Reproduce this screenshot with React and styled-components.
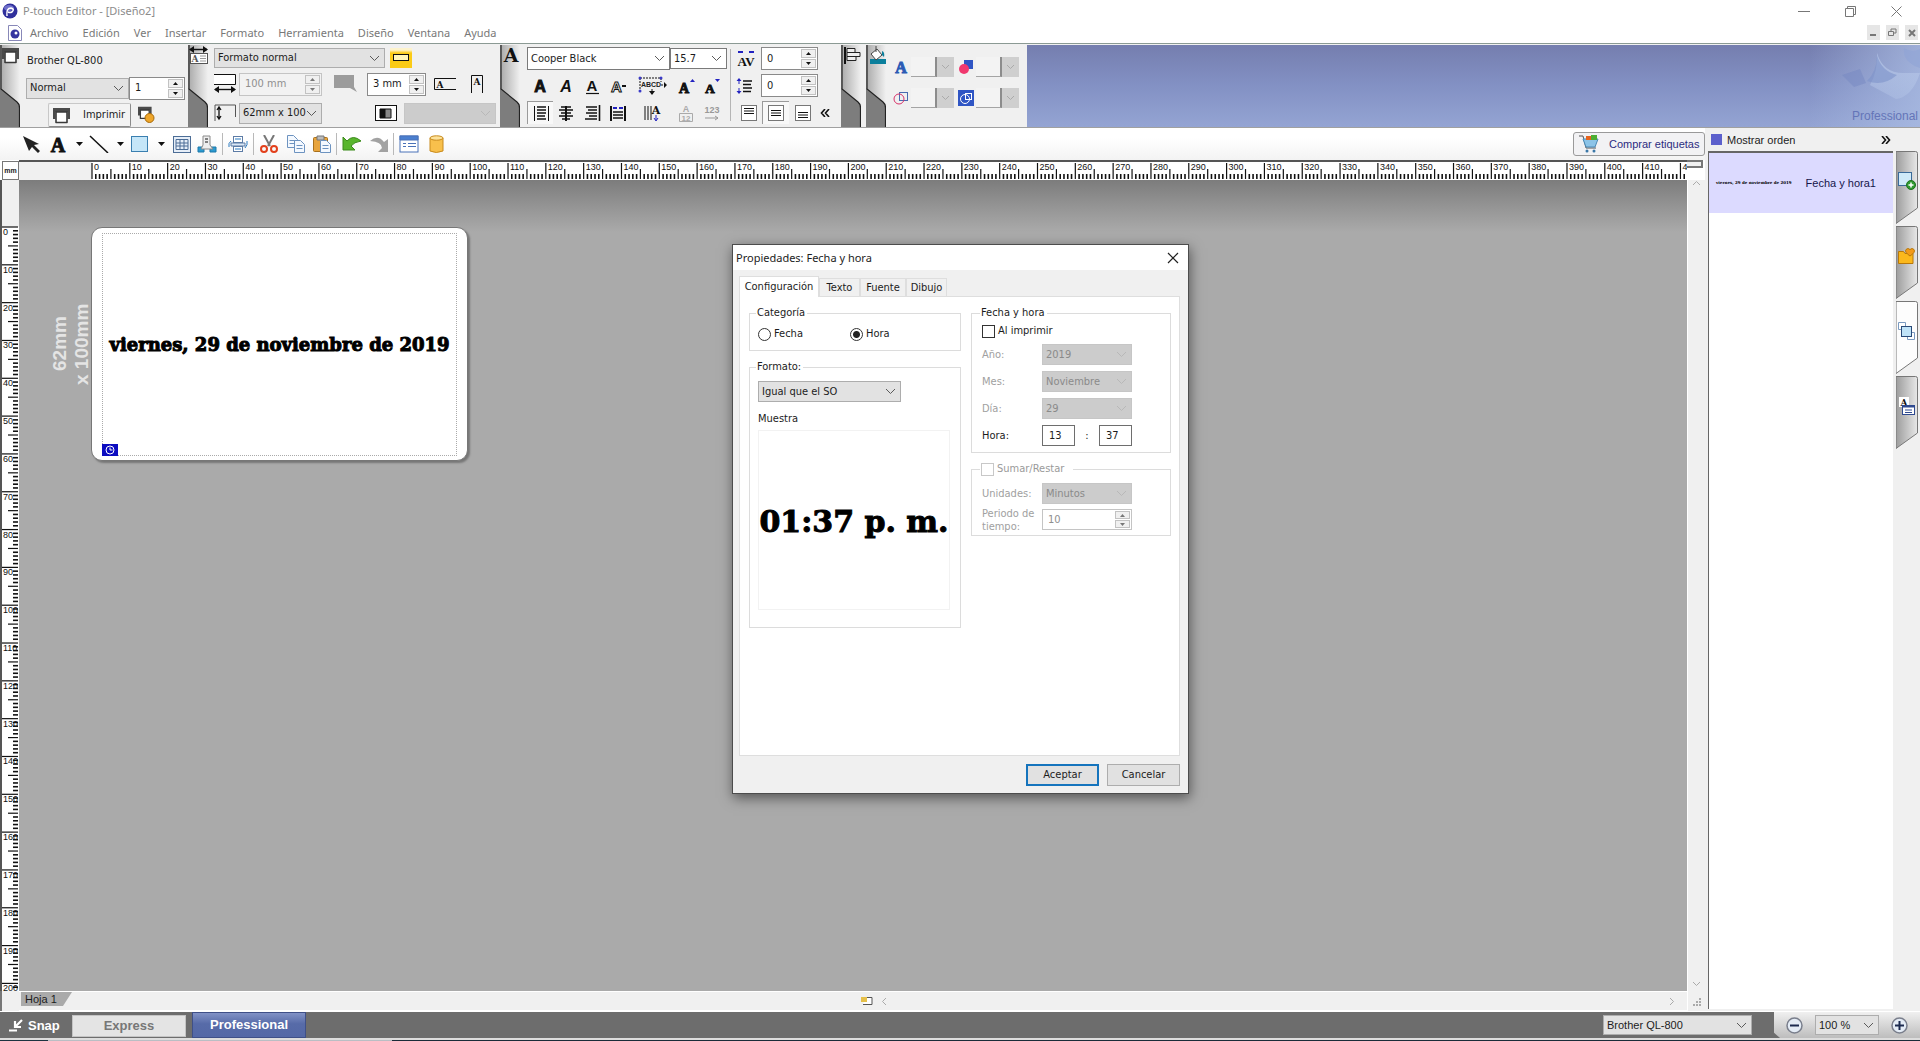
import React from "react";
import styled, { createGlobalStyle, css } from "styled-components";

const ui = `"DejaVu Sans Condensed", "DejaVu Sans", Roboto, sans-serif`;
const segoe = `"Noto Sans", "Open Sans", sans-serif`;
const arial = `"Liberation Sans", Arial, sans-serif`;
const slab = `"DejaVu Serif", "Liberation Serif", serif`;

const Global = createGlobalStyle`
  *, *::before, *::after { box-sizing: border-box; }
  body { margin: 0; overflow: hidden; background: #fff; }
  button, input, select { font: inherit; color: inherit; margin: 0; border-radius: 0; }
  button { padding: 0; border: 0; background: none; }
  svg { display: block; flex: none; }
`;

const Page = styled.div`
  display: flex;
  flex-direction: column;
  height: 100vh;
  font: 11px/14px ${ui};
  color: #1c1c1c;
`;

/* ---------- title and menu ---------- */

const TitleBar = styled.header`
  display: flex;
  align-items: center;
  height: 22px;
  padding: 0 12px 0 2px;
  gap: 5px;
  font: 11px/14px ${segoe};
  color: #8c8c8c;
`;
const WindowButtons = styled.div`
  display: flex;
  margin-left: auto;
  gap: 22px;
`;
const WindowButton = styled.button`
  display: grid;
  place-items: center;
  width: 24px;
  height: 20px;
`;
const MenuBar = styled.nav`
  display: flex;
  align-items: center;
  height: 22px;
  padding: 0 2px 0 8px;
  gap: 8px;
  border-bottom: 1px solid #8b9a94;
  font: 11px/14px ${segoe};
`;
const MenuLinks = styled.div`
  display: flex;
  gap: 14px;
`;
const MenuLink = styled.a`
  color: #787878;
  text-decoration: none;
`;
const MdiButtons = styled.div`
  display: flex;
  margin-left: auto;
  gap: 6px;
`;
const MdiButton = styled.button`
  display: grid;
  place-items: center;
  width: 13px;
  height: 15px;
  background: #e6e6e6;
`;

/* ---------- form pieces ---------- */

const SelectBox = styled.span`
  display: grid;
  grid-template-columns: 1fr 15px;
  align-items: center;
  flex: none;
  width: ${(p) => p.$w}px;
  height: ${(p) => p.$h || 21}px;
  background: ${(p) => (p.$off ? "#cccccc" : p.$white ? "#fff" : "#e2e2e2")};
  border: 1px solid ${(p) => (p.$off ? "#c6c6c6" : p.$white ? "#7a7a7a" : "#adadad")};
  color: ${(p) => (p.$off ? "#8a8a8a" : "#1c1c1c")};
  select {
    grid-area: 1 / 1 / 2 / 3;
    width: 100%;
    height: 100%;
    padding: 0 15px 0 3px;
    appearance: none;
    border: 0;
    background: none;
    opacity: 1;
  }
  svg {
    grid-area: 1 / 2;
    pointer-events: none;
  }
`;
const Pick = ({ w, h, off, white, value, label, id }) => (
  <SelectBox $w={w} $h={h} $off={off} $white={white}>
    <select id={id} aria-label={label} disabled={off} defaultValue={value}>
      <option>{value}</option>
    </select>
    <svg width="11" height="7" fill="none" stroke={off ? "#b8b8b8" : "#5a5a5a"}>
      <path d="M1 1l4.500 4.500L10 1" />
    </svg>
  </SelectBox>
);

const SpinBox = styled.span`
  display: flex;
  flex: none;
  width: ${(p) => p.$w}px;
  height: ${(p) => p.$h || 23}px;
  padding: 1px;
  background: ${(p) => (p.$pale ? "#f2f2f2" : "#fff")};
  border: 1px solid ${(p) => (p.$off ? "#c4c4c4" : "#8a8a8a")};
  color: ${(p) => (p.$off ? "#8f8f8f" : "#1c1c1c")};
  input {
    flex: 1;
    min-width: 0;
    padding: 0 4px;
    border: 0;
    background: none;
  }
`;
const SpinArrows = styled.span`
  display: grid;
  grid-template-rows: 1fr 1fr;
  width: 15px;
  gap: 1px;
`;
const SpinButton = styled.button`
  display: grid;
  place-items: center;
  background: #f0f0f0;
  border: 1px solid #c2c2c2;
`;
const Spin = ({ w, h, off, pale, value, label, id }) => (
  <SpinBox $w={w} $h={h} $off={off} $pale={pale}>
    <input id={id} aria-label={label} type="text" defaultValue={value} disabled={off} />
    <SpinArrows>
      {["M0 3L2.5 0L5 3z", "M0 0L2.5 3L5 0z"].map((d) => (
        <SpinButton key={d} aria-label={`${label} ${d[3] === "3" ? "+" : "-"}`} disabled={off}>
          <svg width="5" height="3"><path d={d} fill={off ? "#777" : "#111"} /></svg>
        </SpinButton>
      ))}
    </SpinArrows>
  </SpinBox>
);

/* ---------- ribbon ---------- */

const Ribbon = styled.section`
  display: flex;
  height: 84px;
  padding-top: 1px;
  flex: none;
  background: #f0f0f0;
  border-bottom: 1px solid #a0a0a0;
`;
const Group = styled.div`
  display: flex;
  flex: none;
`;
const GroupBody = styled.div`
  display: flex;
  flex-direction: column;
  width: ${(p) => p.$w}px;
  padding: 3px 0 0 6px;
  gap: 4px;
`;
const Line = styled.div`
  display: flex;
  align-items: center;
  height: ${(p) => p.$h || 23}px;
  gap: ${(p) => p.$gap || 0}px;
`;
const Columns = styled.div`
  display: flex;
  width: ${(p) => p.$w}px;
`;
const Column = styled.div`
  display: flex;
  flex-direction: column;
  flex: none;
  gap: 4px;
  padding: 2px 0 0 ${(p) => p.$left}px;
  width: ${(p) => p.$w}px;
`;
const Divider = styled.span`
  width: 1px;
  height: 72px;
  margin-top: 4px;
  background: #b5b5b5;
`;
const Tool = styled.button`
  display: grid;
  place-items: center;
  flex: none;
  width: ${(p) => p.$w || 26}px;
  height: ${(p) => p.$h || 23}px;
  ${(p) =>
    p.$on &&
    css`
      background: #f8f8f8;
      border-left: 1px solid #9a9a9a;
      border-top: 1px solid #9a9a9a;
    `}
`;
const PrinterName = styled.span`
  padding-left: 1px;
`;
const PrintRow = styled.div`
  display: flex;
  align-items: center;
  gap: 7px;
  height: 24px;
  padding-left: 22px;
`;
const PrintButton = styled.button`
  display: flex;
  align-items: center;
  width: 83px;
  height: 24px;
  padding-left: 4px;
  gap: 12px;
  background: #f3f3f3;
  border: 1px solid #c8c8c8;
  border-right-color: #8a8a8a;
  border-bottom-color: #8a8a8a;
  border-radius: 2px;
`;
const FormatButton = styled.button`
  display: grid;
  place-items: center;
  width: 22px;
  height: 20px;
  background: linear-gradient(#fdf3cc 2px, #fbcb16 5px);
`;
const ColorPair = styled.div`
  display: grid;
  grid-template-columns: 18px 26px 17px;
  align-items: center;
  height: 22px;
`;
const Swatch = styled.button`
  height: 20px;
  background: #f3f3f3;
  border-right: 2px solid #8c8c8c;
  border-bottom: 1px solid #a4a4a4;
`;
const SwatchDrop = styled.button`
  display: grid;
  place-items: center;
  height: 20px;
  background: #cfcfcf;
`;
const ColorGrid = styled.div`
  display: grid;
  grid-template-columns: 61px 61px;
  gap: 9px 4px;
  width: 141px;
  padding: 11px 0 0 7px;
  align-content: start;
`;
const Banner = styled.div`
  position: relative;
  display: flex;
  flex: 1;
  justify-content: flex-end;
  align-items: flex-end;
  overflow: hidden;
  background: linear-gradient(#757eaf, #8391c4 50%, #94a4d3);
  svg {
    position: absolute;
    right: 0;
    top: 0;
  }
`;
const BannerText = styled.span`
  position: relative;
  padding: 0 2px 4px 0;
  font: 12px/14px ${arial};
  color: #6475b8;
`;

const TabShape = ({ children }) => (
  <svg width="20" height="82" viewBox="0 0 20 82">
    <defs>
      <linearGradient id="tabFill"><stop offset="0" stopColor="#a8a8a8" /><stop offset="1" stopColor="#f0f0f0" /></linearGradient>
    </defs>
    <rect width="20" height="82" fill="#7d7d7d" />
    <path d="M0 0H20V62Q20 59 17 57L0 43z" fill="url(#tabFill)" />
    <path d="M1 0V44L17 57Q19.500 59 19.500 63V82" fill="none" stroke="#222" strokeWidth="1.200" />
    {children}
  </svg>
);

const Ink = ({ w = 20, h = 18, children, ...p }) => (
  <svg width={w} height={h} viewBox={`0 0 ${w} ${h}`} fill="none" stroke="#111" {...p}>{children}</svg>
);
const Glyph = ({ x, y, s, f = slab, w = "bold", fill = "#111", style = "normal", children, ...p }) => (
  <text x={x} y={y} textAnchor="middle" stroke="none" fill={fill} fontFamily={f} fontSize={s} fontWeight={w} fontStyle={style} {...p}>{children}</text>
);
const Printer = () => (
  <g>
    <path d="M0 1h17v11h-2.500V5h-12v7H0z" fill="#4a4a4a" stroke="none" />
    <path d="M3 5h11v10.500H3z" fill="#fff" stroke="#3a3a3a" strokeWidth="1.600" strokeLinejoin="round" />
  </g>
);
const rows = (xs) => xs.map(([a, b, y]) => <path key={y} d={`M${a} ${y}H${b}`} strokeWidth="1.500" />);
const Small = ({ d }) => <Ink w={9} h={6} stroke="#aaa"><path d={d || "M1 1l3.500 3.500L8 1"} /></Ink>;

const TextIcons = [
  ["Negrita", 26, <Ink><Glyph x={10} y={15} s={16} f={arial} w={900} stroke="#111">A</Glyph></Ink>],
  ["Cursiva", 26, <Ink><Glyph x={10} y={15} s={16} f={arial} style="italic">A</Glyph></Ink>],
  ["Subrayado", 26, <Ink><Glyph x={10} y={14} s={15} f={arial}>A</Glyph><path d="M4 16.500h13" strokeWidth="1.200" /></Ink>],
  ["Contorno", 26, <Ink><text x="3" y="15" fontFamily={arial} fontWeight="bold" fontSize="15" fill="#fff" stroke="#111">A</text><path d="M14 9h4" strokeWidth="2" /></Ink>],
  ["Ajuste", 42, <Ink w={30} h={20}><path d="M3 2h21M3 2v13M24 2v4M24 9h6M15 13v5" strokeDasharray="2 1" /><Glyph x={14} y={11} s={7} f={arial} fill="#222">ABCD</Glyph><path d="M27 6l3 3-3 3zM12 15l3 4 3-4z" fill="#111" stroke="none" /><g fill="#3a3ac8" stroke="none"><circle cx="3" cy="2" r="1.500" /><circle cx="24" cy="2" r="1.500" /><circle cx="3" cy="15" r="1.500" /></g></Ink>],
  ["Aumentar", 26, <Ink><Glyph x={8} y={16} s={14} f={`"Liberation Serif", serif`} stroke="#111">A</Glyph><path d="M14 5l2.500-3L19 5z" fill="#2222c0" stroke="none" /></Ink>],
  ["Reducir", 26, <Ink><Glyph x={8} y={16} s={13} f={`"Liberation Serif", serif`} stroke="#111">A</Glyph><path d="M13 2l2.500 3L18 2z" fill="#2222c0" stroke="none" /></Ink>],
];
const AlignIcons = [
  ["Izquierda", 26, <Ink><path d="M3.500 2v15M17.500 2v15" />{rows([[6, 15, 3], [6, 15, 6], [6, 15, 9], [6, 14, 12], [6, 15, 15]])}</Ink>, true],
  ["Centro", 26, <Ink><path d="M10 2v15" strokeWidth="2" />{rows([[5, 15, 3], [3, 17, 6], [5, 15, 9], [3, 17, 12], [6, 14, 15]])}</Ink>],
  ["Derecha", 26, <Ink><path d="M17.500 1v16" strokeWidth="1.600" />{rows([[4, 15, 3], [6, 15, 6], [4, 15, 9], [7, 15, 12], [3, 15, 15]])}</Ink>],
  ["Justificar", 26, <Ink><path d="M3 2v15M17 2v15" strokeWidth="2" /><path d="M5 4h10" stroke="#2222c0" strokeWidth="2" strokeDasharray="4 2" />{rows([[5, 15, 8], [5, 15, 11], [5, 15, 14]])}</Ink>],
  ["Vertical", 42, <Ink><path d="M3 2v14M6 2v14M9 2v14" /><Glyph x={14} y={10} s={11}>A</Glyph><path d="M14 11v5M12 14l2 3 2-3" stroke="#2222c0" /></Ink>],
  ["Fracción", 26, <Ink stroke="#aaa"><Glyph x={10} y={8} s={9} f={arial} fill="#aaa">A</Glyph><path d="M3.500 9.500h13v8h-13z" /><Glyph x={10} y={17} s={8} f={arial} fill="#aaa">12</Glyph></Ink>],
  ["Numeración", 26, <Ink stroke="#999"><Glyph x={10} y={9} s={9} f={arial} fill="#999">123</Glyph><path d="M3 14h13M13 12l3 2-3 2" /></Ink>],
];
const VAlign = [["Arriba", 4], ["Medio", 6], ["Abajo", 8]];

const Spacer = styled.span`
  flex: none;
  width: ${(p) => p.$w}px;
`;

function RibbonBar() {
  return (
    <Ribbon>
      <Group>
        <TabShape><g transform="translate(2 2)"><Printer /></g></TabShape>
        <GroupBody $w={168}>
          <Line $h={25}><PrinterName>Brother QL-800</PrinterName></Line>
          <Line $h={22}><Pick w={103} value="Normal" label="Calidad" /><Spin w={56} value="1" label="Copias" /></Line>
          <PrintRow>
            <PrintButton><Ink w={18} h={17}><Printer /></Ink>Imprimir</PrintButton>
            <Tool $w={18} aria-label="Opciones de impresión"><Ink w={18} h={18}><g transform="scale(.8)"><Printer /></g><circle cx="11.500" cy="12" r="4.500" fill="#efa62a" stroke="#a66a0c" /></Ink></Tool>
          </PrintRow>
        </GroupBody>
      </Group>
      <Group>
        <TabShape>
          <path d="M2 4.500h17" stroke="#111" strokeWidth="1.500" /><path d="M6 1v7L1 4.500zM15 1v7l5-3.500z" fill="#111" />
          <rect x="2.500" y="8.500" width="17" height="10" fill="#fff" stroke="#555" />
          <Glyph x={7} y={17} s={9} fill="#555">A</Glyph><path d="M12 11h6M12 13.500h6M12 16h6" stroke="#999" />
        </TabShape>
        <GroupBody $w={292}>
          <Line $h={20} $gap={5}><Pick w={171} h={20} value="Formato normal" label="Formato" /><FormatButton aria-label="Cinta"><Ink w={16} h={8}><rect x=".5" y=".5" width="15" height="6" fill="#fff6b8" /></Ink></FormatButton></Line>
          <Line $h={24} $gap={3}>
            <Ink w={22} h={20}><path d="M0 .500h21.500v10H0" fill="#fff" /><path d="M1 15.500h20" strokeWidth="1.400" /><path d="M5 12v7L0 15.500zM17 12v7l5-3.500z" fill="#111" stroke="none" /></Ink>
            <Spin w={83} off pale value="100 mm" label="Longitud" />
            <Spacer $w={6} />
            <Ink w={24} h={20} stroke="none"><path d="M0 1h20v12l3 5-7-4H0z" fill="#9c9c9c" /></Ink>
            <Spacer $w={3} />
            <Spin w={59} value="3 mm" label="Margen" />
            <Tool $w={32} aria-label="Horizontal"><Ink w={22} h={14}><path d="M22 1.500H.500v11H22" /><Glyph x={6} y={11} s={9}>A</Glyph></Ink></Tool>
            <Tool $w={26} aria-label="Vertical"><Ink w={14} h={18}><path d="M1.500 18V.500h11V18" /><Glyph x={7} y={10} s={9}>A</Glyph></Ink></Tool>
          </Line>
          <Line $h={26} $gap={3}>
            <Ink w={22} h={18}><path d="M1 17V1h20.500v12" stroke="#555" /><path d="M5 3v12M3 6l2-3 2 3M3 12l2 3 2-3" strokeWidth="1.300" /></Ink>
            <Pick w={83} value="62mm x 100mm" label="Tamaño" />
            <Spacer $w={47} />
            <Ink w={22} h={16}><rect x=".5" y=".5" width="21" height="15" fill="#fff" /><path d="M5 4h5v9H5z" fill="#111" /><path d="M10 4h6v9h-6z" fill="#888" /></Ink>
            <Spacer $w={1} />
            <Pick w={92} off value="" label="Color" />
          </Line>
        </GroupBody>
      </Group>
      <Group>
        <TabShape><Glyph x={11} y={17} s={19}>A</Glyph></TabShape>
        <Columns $w={321}>
          <Column $w={210} $left={7}>
            <Line $h={23}><Pick w={143} h={23} white value="Cooper Black" label="Fuente" /><Pick w={57} h={21} white value="15.7" label="Tamaño de fuente" /></Line>
            <Line>{TextIcons.map(([n, w, i]) => <Tool key={n} $w={w} aria-label={n}>{i}</Tool>)}</Line>
            <Line>{AlignIcons.map(([n, w, i, on]) => <Tool key={n} $w={w} $on={on} aria-label={n}>{i}</Tool>)}</Line>
          </Column>
          <Divider />
          <Column $w={110} $left={4}>
            <Line $gap={4}>
              <Ink w={22} h={20}><Glyph x={11} y={17} s={13} f={`"Liberation Serif", serif`}>AV</Glyph><path d="M3 3h5M14 3h5" stroke="#2222c0" strokeWidth="2" /></Ink>
              <Spin w={57} value="0" label="Espaciado" />
            </Line>
            <Line $gap={4}>
              <Ink w={22} h={18}><path d="M8 4h9M8 7.500h8M8 11h9M8 14.500h8" strokeWidth="1.500" /><path d="M4 4v3M4 11v3" stroke="#2222c0" /><path d="M1.500 4L4 1l2.500 3zM1.500 14L4 17l2.500-3z" fill="#2222c0" stroke="none" /></Ink>
              <Spin w={57} value="0" label="Interlineado" />
            </Line>
            <Line>
              {VAlign.map(([n, y]) => (
                <Tool key={n} $w={27} $on={n === "Medio"} aria-label={n}><Ink w={16} h={16}><rect x=".5" y=".5" width="15" height="15" stroke="#777" fill="#fff" /><path d={`M3 ${y - 0.5}h10M3 ${y + 2}h10M3 ${y + 4.5}h10`} /></Ink></Tool>
              ))}
              <Tool $w={18} aria-label="Contraer"><Ink w={10} h={8}><path d="M5 0L1.500 4L5 8M9 0L5.500 4L9 8" strokeWidth="1.600" /></Ink></Tool>
            </Line>
          </Column>
        </Columns>
      </Group>
      <Group>
        <TabShape><path d="M4 2v17" stroke="#111" strokeWidth="2" /><path d="M6 3.500h8v4H6zM6 7.500h13v4H6zM6 11.500h9v4H6z" fill="#eee" stroke="#222" /></TabShape>
        <Spacer $w={5} />
      </Group>
      <Group>
        <TabShape><rect x="4" y="14" width="16" height="5" fill="#0b7f9c" /><path d="M5 9l6-5 5 6-6 5z" fill="#fff" stroke="#444" /><path d="M16 6q3 1 2 6l-2-2z" fill="#0b7f9c" /><path d="M10 7V1" stroke="#444" /></TabShape>
        <ColorGrid>
          {[
            ["Color de texto", <Glyph x={8} y={14} s={16} fill="#2b5bb5" f={`"Liberation Serif", serif`} stroke="#2b5bb5">A</Glyph>],
            ["Color de relleno", <g stroke="none"><rect x="6" y="1" width="9" height="9" fill="#2f55c4" /><circle cx="6" cy="10" r="5" fill="#f0386e" /></g>],
            ["Contorno", <g><rect x="6.500" y="2.500" width="8" height="8" stroke="#4a6ab0" /><circle cx="6" cy="9" r="5" stroke="#d8326a" /></g>],
            ["Fondo", <g><rect width="16" height="16" fill="#2f55c4" stroke="none" /><rect x="7.500" y="3.500" width="6" height="6" stroke="#fff" /><circle cx="7" cy="9" r="4.500" stroke="#fff" /></g>],
          ].map(([n, g]) => (
            <ColorPair key={n}>
              <Ink w={16} h={16}>{g}</Ink>
              <Swatch aria-label={n} />
              <SwatchDrop aria-label={`${n}: lista`}><Small /></SwatchDrop>
            </ColorPair>
          ))}
        </ColorGrid>
      </Group>
      <Banner>
        <svg width="110" height="83" viewBox="0 0 110 83">
          <defs>
            <linearGradient id="haze"><stop offset="0" stopColor="#a9bbe2" stopOpacity="0" /><stop offset="1" stopColor="#a9bbe2" stopOpacity=".8" /></linearGradient>
            <linearGradient id="petal" x2="0" y2="1"><stop offset="0" stopColor="#b4c4e6" stopOpacity=".8" /><stop offset="1" stopColor="#bccdec" stopOpacity=".3" /></linearGradient>
          </defs>
          <rect width="110" height="83" fill="url(#haze)" />
          <path d="M32 30l18-6 6 14-12 4z" fill="#7688c2" opacity=".5" />
          <path d="M67 8q6 20 26 20h17q-8 24-24 26L60 40q8-14 7-32z" fill="url(#petal)" />
          <path d="M67 10q4 16 20 20q-14 12-30 6q10-10 10-26z" fill="#7d92ca" opacity=".6" />
          <path d="M94 3q-2 14 16 20V4q-8 4-16-1z" fill="#8fa4d6" opacity=".6" />
        </svg>
        <BannerText>Professional</BannerText>
      </Banner>
    </Ribbon>
  );
}

/* ---------- toolbar ---------- */

const Toolbar = styled.div`
  display: flex;
  align-items: center;
  flex: none;
  height: 32px;
  padding-left: 19px;
  background: linear-gradient(#fff 30%, #f3f3f3);
`;
const ToolSeparator = styled.span`
  width: 1px;
  height: 22px;
  margin: 0 1px;
  background: #b9b9b9;
`;
const BuyButton = styled.button`
  display: flex;
  align-items: center;
  margin-left: auto;
  width: 132px;
  height: 24px;
  padding-left: 5px;
  gap: 10px;
  background: #f2f2f4;
  border: 1px solid #9a9a9a;
  border-radius: 3px;
  font: 11px/14px ${arial};
  color: #2c2c80;
  white-space: nowrap;
`;
const drop = <Ink w={7} h={4} stroke="none"><path d="M0 0h7L3.500 4z" fill="#111" /></Ink>;
const page = (x, y, k) => <path key={k} d={`M${x} ${y}h6l4 4v8h-10zM${x + 2} ${y + 5}h6M${x + 2} ${y + 8}h6`} fill="#f4f9ff" stroke="#6d93c0" />;
const tools = [
  ["Seleccionar", 26, <Ink><path d="M1 1l16 8-5 1 6 6-2 2-6-6-3 4z" fill="#222" stroke="none" /></Ink>],
  ["Texto", 26, <Ink><Glyph x={10} y={17} s={20} f={`"Liberation Serif", serif`} stroke="#111">A</Glyph></Ink>],
  ["Texto: lista", 16, drop],
  ["Línea", 24, <Ink><path d="M1 1l18 17" strokeWidth="1.500" /></Ink>],
  ["Línea: lista", 18, drop],
  ["Forma", 22, <Ink><rect x="1.500" y="1.500" width="16" height="15" fill="#c5e6f8" stroke="#3a7fb0" /></Ink>],
  ["Forma: lista", 20, drop],
  ["Tabla", 22, <Ink stroke="#4c6d96"><rect x="1.500" y="1.500" width="17" height="16" fill="#e6eef8" /><path d="M4 4.500h12v10H4zM4 8h12M4 11h12M8 4.500v10M12 4.500v10" /></Ink>],
  ["Base de datos", 28, <Ink><path d="M1 12h6v5H1zM13 12h6v5h-6z" fill="#2a9ad0" stroke="#1c78aa" /><path d="M6 1h7v9l3 4H4l2-4z" fill="#eee" stroke="#8a8a8a" /><path d="M8 4h3M8 7h3" /></Ink>],
  null,
  ["Vista previa", 28, <Ink stroke="#5d7ca6"><rect x="5.500" y="1.500" width="9" height="6" fill="#fff" /><path d="M3 8h14v3H3z" fill="#dce8f6" /><rect x="5.500" y="11.500" width="9" height="5" fill="#fff" /><path d="M7 4h6M7 14h6M1 12q-1-4 2-6M19 6q1 4-2 7" stroke="#2b7ac0" /></Ink>],
  null,
  ["Cortar", 28, <Ink><path d="M5 0l6 11M15 0L9 11" stroke="#777" strokeWidth="2" /><circle cx="5" cy="14" r="3" stroke="#e2401c" strokeWidth="2" /><circle cx="15" cy="14" r="3" stroke="#e2401c" strokeWidth="2" /></Ink>],
  ["Copiar", 26, <Ink>{page(1.5, 0.5, 1)}{page(8.5, 5.5, 2)}</Ink>],
  ["Pegar", 26, <Ink><rect x="1.500" y="2.500" width="14" height="14" rx="1" fill="#e8a43c" stroke="#a8701c" /><path d="M5 1h7v4H5z" fill="#bbb" stroke="#777" />{page(8.5, 5.5, 2)}</Ink>],
  null,
  ["Deshacer", 28, <Ink><path d="M1 2v13h12l-4-4q3-4 10-5Q11-1 5 6z" fill="#58b52c" stroke="#3a8a1a" /></Ink>],
  ["Rehacer", 26, <Ink><path d="M19 4v13H9l4-4q0-6-12-7Q9-1 15 7z" fill="#a2a2a2" stroke="none" /></Ink>],
  null,
  ["Propiedades", 28, <Ink stroke="#4a72b8"><rect x="1" y="1" width="18" height="16" fill="#fff" /><path d="M1 1h18v4H1z" fill="#4a7fd0" /><path d="M4 8.500h3M4 11.500h3M9 8.500h8M9 11.500h8" /></Ink>],
  ["Conectar", 26, <Ink><path d="M4 3v13q6 3 13 0V3z" fill="#f8c04c" stroke="#c88a1c" /><ellipse cx="10.500" cy="3" rx="6.500" ry="2.200" fill="#fde29a" stroke="#c88a1c" /></Ink>],
];

/* ---------- workspace ---------- */

const Main = styled.main`
  display: flex;
  flex: 1;
  min-height: 0;
`;
const Editor = styled.section`
  display: flex;
  flex-direction: column;
  flex: 1;
  min-width: 0;
`;
const Workspace = styled.div`
  display: grid;
  grid-template: 20px minmax(0, 1fr) 20px / 19px minmax(0, 1fr) 18px;
  flex: 1;
  min-height: 0;
`;
const Corner = styled.div`
  display: grid;
  place-items: center;
  margin: 1px 0 0 2px;
  background: #fff;
  border: 1px solid #777;
  font: bold 7px/10px ${arial};
`;
const RulerBox = styled.div`
  overflow: hidden;
  background: #f0f0f0;
  border: 0 solid #555;
  border-width: ${(p) => (p.$vertical ? "0 0 0 2px" : "2px 0 0 0")};
`;
const ScrollEnd = styled.div`
  border: 1px solid #777;
  border-width: 2px 2px 2px 0;
  background: #f0f0f0;
  margin: 0 2px 12px 0;
`;
const Canvas = styled.div`
  position: relative;
  overflow: hidden;
  background: linear-gradient(#7c7c7c, #929292 24px, #aaaaaa 52px);
`;
const SizeMark = styled.div`
  position: absolute;
  left: 30px;
  top: 114px;
  width: 44px;
  height: 100px;
  writing-mode: vertical-rl;
  transform: rotate(180deg);
  text-align: center;
  font: bold 19px/22px ${arial};
  color: #e4e4e4;
  display: flex;
  flex-direction: column-reverse;
`;
const LabelSheet = styled.div`
  position: absolute;
  left: 72px;
  top: 47px;
  width: 377px;
  height: 234px;
  padding: 5px 10px 4px;
  display: flex;
  background: #fff;
  border: 1px solid #777;
  border-radius: 11px;
  box-shadow: 2px 2px 2px #777;
`;
const PrintArea = styled.div`
  position: relative;
  flex: 1;
  display: grid;
  place-items: center;
  border: 1px dotted #aaa;
  font: bold 18px/24px ${slab};
  color: #000;
  white-space: nowrap;
  -webkit-text-stroke: 1px #000;
`;
const ClockBadge = styled.span`
  position: absolute;
  left: -1px;
  bottom: -1px;
  width: 16px;
  height: 12px;
  background: #0c0cc0;
`;
const VScroll = styled.div`
  display: flex;
  flex-direction: column;
  justify-content: space-between;
  align-items: center;
  padding: 0 0 4px;
  background: #f0f0f0;
  border-left: 1px solid #fff;
`;
const BottomCell = styled.div`
  background: #f0f0f0;
  border-left: 2px solid #777;
`;
const SheetRow = styled.div`
  display: flex;
  align-items: center;
  background: #f0f0f0;
  border-top: 1px solid #fff;
  border-bottom: 1px solid #fff;
  padding-left: 2px;
`;
const SheetTab = styled.button`
  align-self: flex-start;
  width: 51px;
  height: 14px;
  padding-left: 4px;
  text-align: left;
  font: 11px/12px ${arial};
  background: #aaa;
  clip-path: polygon(0 0, 100% 0, 42px 100%, 0 100%);
`;
const HScroll = styled.div`
  display: flex;
  flex: 1;
  align-items: center;
  justify-content: space-between;
  padding: 0 12px 0 6px;
`;
const HScrollLead = styled.div`
  display: flex;
  align-items: center;
  gap: 8px;
  margin-left: 49%;
`;

const PER_MM = 37.82 / 10;
function Ruler({ vertical, count, start }) {
  const out = [];
  for (let i = 0; i <= count; i++) {
    const at = start + i * PER_MM;
    const major = i % 10 === 0;
    const len = major ? 17 : i % 5 === 0 ? 11 : 6;
    out.push(
      <path key={i} d={vertical ? `M${17 - len} ${at}H16` : `M${at} ${18 - len}V17`} stroke="#111" strokeWidth={major || i % 5 === 0 ? 1.2 : 1.6} />
    );
    if (major)
      out.push(
        <text key={`t${i}`} x={vertical ? 1 : at + 2} y={vertical ? at + 8 : 8} fontFamily={arial} fontSize="9" fill="#111">{i}</text>
      );
  }
  return (
    <svg width="100%" height="100%">
      <rect x={vertical ? 0 : start} y={vertical ? start : 0} width="100%" height="100%" fill="#fff" />
      {out}
    </svg>
  );
}

/* ---------- order panel ---------- */

const Side = styled.aside`
  display: flex;
  flex: none;
  width: 215px;
  padding-left: 3px;
  background: #f0f0f0;
`;
const OrderPanel = styled.div`
  display: flex;
  flex-direction: column;
  width: 185px;
`;
const OrderHead = styled.div`
  display: flex;
  align-items: center;
  height: 23px;
  padding: 0 2px 0 3px;
  gap: 5px;
  font: 11px/14px ${arial};
`;
const HeadSquare = styled.span`
  width: 11px;
  height: 11px;
  background: #5c60cc;
`;
const HeadButton = styled.button`
  margin-left: auto;
`;
const OrderList = styled.ul`
  flex: 1;
  margin: 0 0 2px;
  padding: 0;
  list-style: none;
  background: #fff;
  border-left: 1px solid #666;
  border-top: 2px solid #666;
`;
const OrderItem = styled.li`
  display: flex;
  align-items: center;
  height: 60px;
  padding-left: 7px;
  gap: 14px;
  background: #dcdaff;
  font: 11px/14px ${arial};
  color: #15154a;
`;
const Thumb = styled.span`
  font: bold 4px/6px ${slab};
  white-space: nowrap;
  color: #000;
`;
const SideTabs = styled.div`
  display: flex;
  flex-direction: column;
  gap: 2px;
  padding: 23px 0 0 3px;
`;
const SideTab = styled.button`
  width: 22px;
  height: 73px;
`;
const sideIcons = [
  ["Agregar objeto", <g><rect x="2.500" y="21.500" width="13" height="13" fill="#cfeaf8" stroke="#3a6a98" /><circle cx="15" cy="34" r="4.500" fill="#2f9a2f" stroke="#1f701f" /><path d="M12.500 34h5M15 31.500v5" stroke="#fff" strokeWidth="1.500" /></g>],
  ["Favoritos", <g><path d="M2.500 25.500h5l1.500 2h8v10H2.500z" fill="#fbb81c" stroke="#b8780a" /><path d="M14 30q-6-4-4-6.500q2-2 4 0q2-2 4 0q2 2.500-4 6.500z" fill="#f39a18" stroke="#b8780a" /></g>],
  ["Orden", <g fill="none" stroke="#7a9ac0"><path d="M2.500 21.500h7v7h-7zM11.500 31.500h7v7h-7z" fill="#fff" /><rect x="5.500" y="25.500" width="10" height="10" fill="#bfe3f8" stroke="#2a4a78" /></g>],
  ["Propiedades de texto", <g><rect x="3" y="21" width="10" height="10" fill="#fff" /><Glyph x={8} y={30} s={9}>A</Glyph><rect x="6.500" y="29.500" width="12" height="9" fill="#fff" stroke="#2f4a90" /><path d="M6 30.500h13" stroke="#2f4a90" strokeWidth="2" /><path d="M9 34h7M9 36.500h7" stroke="#2f4a90" /></g>],
];

/* ---------- status bar ---------- */

const Status = styled.footer`
  display: flex;
  align-items: stretch;
  flex: none;
  height: 29px;
  border-top: 1px solid #fff;
  border-bottom: 2px solid #ddd;
  background: #6d6d6d;
`;
const Snap = styled.button`
  display: flex;
  align-items: center;
  width: 72px;
  padding: 1px 0 0 9px;
  gap: 5px;
  font: bold 13px/16px ${arial};
  color: #fff;
`;
const ModeButton = styled.button`
  width: 114px;
  margin: ${(p) => (p.$on ? "0 0 0 6px" : "3px 0 1px")};
  font: bold 13px/16px ${arial};
  color: ${(p) => (p.$on ? "#fff" : "#777")};
  background: ${(p) => (p.$on ? "linear-gradient(#8192c6, #576ba8 45%, #5468a6)" : "#e4e4e4")};
  border: 1px solid ${(p) => (p.$on ? "#3f5088" : "#c4c4c4")};
`;
const StatusEnd = styled.div`
  display: flex;
  align-items: center;
  margin-left: auto;
  gap: 22px;
  font: 11px/14px ${arial};
`;
const Zoom = styled.div`
  display: flex;
  align-items: center;
  align-self: stretch;
  width: 146px;
  padding-left: 12px;
  gap: 12px;
  background: linear-gradient(#f0f0f0, #bdbdbd);
  clip-path: polygon(0 0, 100% 0, 100% 100%, 6px 100%, 0 80%);
`;
const Taskbar = styled.div`
  flex: none;
  height: 1px;
  background: linear-gradient(90deg, #1d3340 48px, #b9bec4 48px 392px, #1a2b38 392px);
`;
const ZoomGlyph = ({ plus }) => (
  <svg width="17" height="17" viewBox="0 0 17 17" fill="none">
    <circle cx="8.500" cy="8.500" r="7.500" fill="#e4ecf6" stroke="#7a7f8c" strokeWidth="1.500" />
    <path d={plus ? "M4 8.500h9M8.500 4v9" : "M4 8.500h9"} stroke="#1c2b50" strokeWidth="2" />
  </svg>
);

/* ---------- dialog ---------- */

const Dialog = styled.section`
  position: absolute;
  left: 732px;
  top: 244px;
  width: 457px;
  background: #f0f0f0;
  border: 1px solid #4c4c4c;
  box-shadow: 1px 4px 12px rgba(0, 0, 0, 0.5);
`;
const DialogTitle = styled.div`
  display: flex;
  align-items: center;
  justify-content: space-between;
  height: 25px;
  padding: 0 9px 0 3px;
  background: #fff;
  font: 11px/14px ${segoe};
`;
const DialogBody = styled.div`
  padding: 6px 8px 7px 6px;
`;
const Tabs = styled.div`
  display: flex;
  align-items: flex-end;
`;
const Tab = styled.button`
  position: relative;
  height: ${(p) => (p.$on ? 21 : 18)}px;
  width: ${(p) => p.$w}px;
  margin-bottom: ${(p) => (p.$on ? -1 : 0)}px;
  background: ${(p) => (p.$on ? "#fff" : "#f0f0f0")};
  border: 1px solid #dedede;
  border-bottom: 0;
`;
const TabPage = styled.div`
  display: flex;
  align-items: flex-start;
  height: 460px;
  gap: 10px;
  padding: 9px;
  background: #fff;
  border: 1px solid #dedede;
`;
const Stack = styled.div`
  display: flex;
  flex-direction: column;
  flex: none;
  gap: 9px;
  width: ${(p) => p.$w}px;
`;
const Fieldset = styled.fieldset`
  min-width: 0;
  height: ${(p) => p.$h}px;
  margin: 0;
  padding: ${(p) => p.$pt || 7}px 6px 0 ${(p) => p.$pl || 8}px;
  border: 1px solid #dcdcdc;
`;
const Legend = styled.legend`
  display: flex;
  align-items: center;
  gap: 3px;
  height: 14px;
  margin-left: -2px;
  padding: 0 2px 0 1px;
  color: ${(p) => (p.$off ? "#9a9a9a" : "#1c1c1c")};
`;
const Choices = styled.div`
  display: flex;
`;
const Choice = styled.label`
  display: flex;
  align-items: center;
  gap: 3px;
  width: ${(p) => p.$w || 90}px;
`;
const Mark = styled.input`
  appearance: none;
  flex: none;
  width: 13px;
  height: 13px;
  margin: 0;
  background: #fff;
  border: 1px solid ${(p) => (p.disabled ? "#c8c8c8" : "#333")};
  &[type="radio"] { border-radius: 50%; }
  &[type="radio"]:checked { background: radial-gradient(#222 3px, #fff 4px); }
`;
const Sample = styled.div`
  display: grid;
  place-items: center;
  width: 192px;
  height: 180px;
  margin-top: 4px;
  padding-top: 3px;
  border: 1px solid #f2f2f2;
  font: bold 30px/40px ${slab};
  color: #000;
  white-space: nowrap;
  -webkit-text-stroke: 1px #000;
`;
const SampleLabel = styled.div`
  margin-top: 10px;
`;
const Fields = styled.div`
  display: flex;
  flex-direction: column;
  gap: ${(p) => p.$gap}px;
`;
const Field = styled.div`
  display: grid;
  grid-template: 21px / 60px auto;
  align-items: center;
  justify-content: start;
  line-height: 13px;
  color: ${(p) => (p.$off ? "#a0a0a0" : "#1c1c1c")};
`;
const TimeInputs = styled.span`
  display: flex;
  align-items: center;
  justify-content: space-between;
  width: 90px;
  input {
    width: 33px;
    height: 21px;
    padding: 0 6px;
    border: 1px solid #6e6e6e;
    background: #fff;
  }
`;
const Actions = styled.div`
  display: flex;
  justify-content: flex-end;
  gap: 8px;
  padding-top: 8px;
`;
const ActionButton = styled.button`
  width: 73px;
  height: 22px;
  background: #e1e1e1;
  border: ${(p) => (p.$primary ? "2px solid #1574bd" : "1px solid #adadad")};
`;

function PropertiesDialog() {
  return (
    <Dialog role="dialog" aria-label="Propiedades: Fecha y hora">
      <DialogTitle>
        Propiedades: Fecha y hora
        <button aria-label="Cerrar"><Ink w={12} h={12} stroke="#222"><path d="M1 1l10 10M11 1L1 11" strokeWidth="1.200" /></Ink></button>
      </DialogTitle>
      <DialogBody>
        <Tabs>
          <Tab $w={80} $on>Configuración</Tab>
          <Tab $w={41}>Texto</Tab>
          <Tab $w={46}>Fuente</Tab>
          <Tab $w={41}>Dibujo</Tab>
        </Tabs>
        <TabPage>
          <Stack $w={212}>
            <Fieldset $h={45}>
              <Legend>Categoría</Legend>
              <Choices>
                <Choice $w={92}><Mark type="radio" name="cat" />Fecha</Choice>
                <Choice><Mark type="radio" name="cat" defaultChecked />Hora</Choice>
              </Choices>
            </Fieldset>
            <Fieldset $h={268}>
              <Legend>Formato:</Legend>
              <Pick w={143} value="Igual que el SO" label="Formato de hora" />
              <SampleLabel>Muestra</SampleLabel>
              <Sample>01:37 p. m.</Sample>
            </Fieldset>
          </Stack>
          <Stack $w={200}>
            <Fieldset $h={147} $pt={4} $pl={10}>
              <Legend>Fecha y hora</Legend>
              <Fields $gap={6}>
                <Choice><Mark type="checkbox" />Al imprimir</Choice>
                <Field $off><label htmlFor="year">Año:</label><Pick id="year" w={90} off value="2019" /></Field>
                <Field $off><label htmlFor="month">Mes:</label><Pick id="month" w={90} off value="Noviembre" /></Field>
                <Field $off><label htmlFor="day">Día:</label><Pick id="day" w={90} off value="29" /></Field>
                <Field>
                  <label htmlFor="hour">Hora:</label>
                  <TimeInputs><input id="hour" defaultValue="13" />:<input aria-label="Minutos" defaultValue="37" /></TimeInputs>
                </Field>
              </Fields>
            </Fieldset>
            <Fieldset $h={74} $pl={10}>
              <Legend $off><Choice><Mark type="checkbox" disabled />Sumar/Restar</Choice></Legend>
              <Fields $gap={5}>
                <Field $off><label htmlFor="units">Unidades:</label><Pick id="units" w={90} off value="Minutos" /></Field>
                <Field $off><label htmlFor="period">Periodo de tiempo:</label><Spin id="period" w={90} h={21} off value="10" label="Periodo" /></Field>
              </Fields>
            </Fieldset>
          </Stack>
        </TabPage>
        <Actions>
          <ActionButton $primary>Aceptar</ActionButton>
          <ActionButton>Cancelar</ActionButton>
        </Actions>
      </DialogBody>
    </Dialog>
  );
}

export default function App() {
  return (
    <Page>
      <Global />
      <TitleBar>
        <svg width="16" height="16"><circle cx="8" cy="8" r="7.500" fill="#30309c" /><ellipse cx="7" cy="5" rx="5" ry="3" fill="#8a8ae0" opacity=".7" /><path d="M5 13q-1-8 4-8q4 1 1 4q-2 1-4 0" stroke="#fff" fill="none" strokeWidth="1.500" /></svg>
        P-touch Editor - [Diseño2]
        <WindowButtons>
          <WindowButton aria-label="Minimizar"><Ink w={12} h={10} stroke="#777"><path d="M0 5.500h12" /></Ink></WindowButton>
          <WindowButton aria-label="Restaurar"><Ink w={11} h={11} stroke="#777"><path d="M.5 2.500h8v8h-8zM2.500 2V.500h8v8H9" /></Ink></WindowButton>
          <WindowButton aria-label="Cerrar"><Ink w={11} h={11} stroke="#777"><path d="M.5.500l10 10M10.500.500l-10 10" /></Ink></WindowButton>
        </WindowButtons>
      </TitleBar>
      <MenuBar>
        <svg width="14" height="16"><path d="M.5.500h9l4 4v11H.500z" fill="#fff" stroke="#8888b8" /><circle cx="7" cy="9" r="4.500" fill="#35359f" /><circle cx="8" cy="8" r="1.500" fill="#fff" /></svg>
        <MenuLinks>
          {["Archivo", "Edición", "Ver", "Insertar", "Formato", "Herramienta", "Diseño", "Ventana", "Ayuda"].map((m) => (
            <MenuLink key={m} href="#">{m}</MenuLink>
          ))}
        </MenuLinks>
        <MdiButtons>
          <MdiButton aria-label="Minimizar documento"><Ink w={7} h={7} stroke="#777"><path d="M0 6h6" strokeWidth="2" /></Ink></MdiButton>
          <MdiButton aria-label="Restaurar documento"><Ink w={9} h={9} stroke="#777"><path d="M.5 3.500h5v4h-5zM3 3V1h5v4H6" /></Ink></MdiButton>
          <MdiButton aria-label="Cerrar documento"><Ink w={8} h={8} stroke="#777"><path d="M1 1l6 6M7 1L1 7" strokeWidth="2" /></Ink></MdiButton>
        </MdiButtons>
      </MenuBar>
      <RibbonBar />
      <Main>
        <Editor>
          <Toolbar>
            {tools.map((t, i) => (t ? <Tool key={i} $w={t[1]} aria-label={t[0]}>{t[2]}</Tool> : <ToolSeparator key={i} />))}
            <BuyButton>
              <Ink w={20} h={18}><path d="M0 1h4l3 12h10" stroke="#555" /><path d="M4 4h15l-3 8H7z" fill="#8cc4e8" stroke="#4a88b4" /><path d="M7 1h6v4H7z" fill="#e6641e" stroke="none" /><path d="M12 0h6v5h-6z" fill="#4cae34" stroke="none" /><circle cx="8" cy="16" r="1.500" fill="#3a78a8" stroke="none" /><circle cx="15" cy="16" r="1.500" fill="#3a78a8" stroke="none" /></Ink>
              Comprar etiquetas
            </BuyButton>
          </Toolbar>
          <Workspace>
            <Corner>mm</Corner>
            <RulerBox><Ruler start={73} count={425} /></RulerBox>
            <ScrollEnd />
            <RulerBox $vertical><Ruler vertical start={47} count={201} /></RulerBox>
            <Canvas>
              <SizeMark><span>x 100mm</span><span>62mm</span></SizeMark>
              <LabelSheet>
                <PrintArea>
                  viernes, 29 de noviembre de 2019
                  <ClockBadge><svg width="16" height="12" fill="none" stroke="#fff"><circle cx="8" cy="6" r="4" /><path d="M8 3.500V6h2.500" /></svg></ClockBadge>
                </PrintArea>
              </LabelSheet>
            </Canvas>
            <VScroll><Small d="M1 5l3.500-3.500L8 5" /><Small /></VScroll>
            <BottomCell />
            <SheetRow>
              <SheetTab>Hoja 1</SheetTab>
              <HScroll>
                <HScrollLead>
                  <Ink w={12} h={10}><path d="M4 1.500h7v7H2" fill="#fff" stroke="#555" /><path d="M0 1h6v5H0z" fill="#e6c04a" stroke="none" /></Ink>
                  <Ink w={6} h={9} stroke="#aaa"><path d="M5 1L1.500 4.500L5 8" /></Ink>
                </HScrollLead>
                <Ink w={6} h={9} stroke="#aaa"><path d="M1 1l3.500 3.500L1 8" /></Ink>
              </HScroll>
            </SheetRow>
            <VScroll><span /><Ink w={10} h={10} stroke="none" fill="#aaa"><path d="M7 1h2v2H7zM4 4h2v2H4zM7 4h2v2H7zM1 7h2v2H1zM4 7h2v2H4zM7 7h2v2H7z" fill="#aaa" /></Ink></VScroll>
          </Workspace>
        </Editor>
        <Side>
          <OrderPanel>
            <OrderHead>
              <HeadSquare />Mostrar orden
              <HeadButton aria-label="Ocultar panel"><Ink w={10} h={8}><path d="M1 0l3.500 4L1 8M5 0l3.500 4L5 8" strokeWidth="1.600" /></Ink></HeadButton>
            </OrderHead>
            <OrderList>
              <OrderItem><Thumb>viernes, 29 de noviembre de 2019</Thumb>Fecha y hora1</OrderItem>
            </OrderList>
          </OrderPanel>
          <SideTabs>
            {sideIcons.map(([n, g], i) => (
              <SideTab key={n} aria-label={n}>
                <svg width="22" height="73">
                  <defs><linearGradient id="sideFill"><stop offset="0" stopColor="#9c9c9c" /><stop offset="1" stopColor="#e8e8e8" /></linearGradient></defs>
                  <path d="M0 .500H19.500Q21.500 .500 21.500 2.500V57L0 72.500z" fill={i === 2 ? "#fdfdfd" : "url(#sideFill)"} stroke="#777" />
                  {g}
                </svg>
              </SideTab>
            ))}
          </SideTabs>
        </Side>
      </Main>
      <Status>
        <Snap><Ink w={14} h={13} stroke="#fff"><path d="M0 11.500h8" strokeWidth="2" /><path d="M13 1L7 7M6 2v6h6" strokeWidth="2.200" /></Ink>Snap</Snap>
        <ModeButton>Express</ModeButton>
        <ModeButton $on>Professional</ModeButton>
        <StatusEnd>
          <Pick w={149} h={20} value="Brother QL-800" label="Impresora" />
          <Zoom>
            <button aria-label="Alejar"><ZoomGlyph /></button>
            <Pick w={64} h={20} value="100 %" label="Zoom" />
            <button aria-label="Acercar"><ZoomGlyph plus /></button>
          </Zoom>
        </StatusEnd>
      </Status>
      <Taskbar />
      <PropertiesDialog />
    </Page>
  );
}
